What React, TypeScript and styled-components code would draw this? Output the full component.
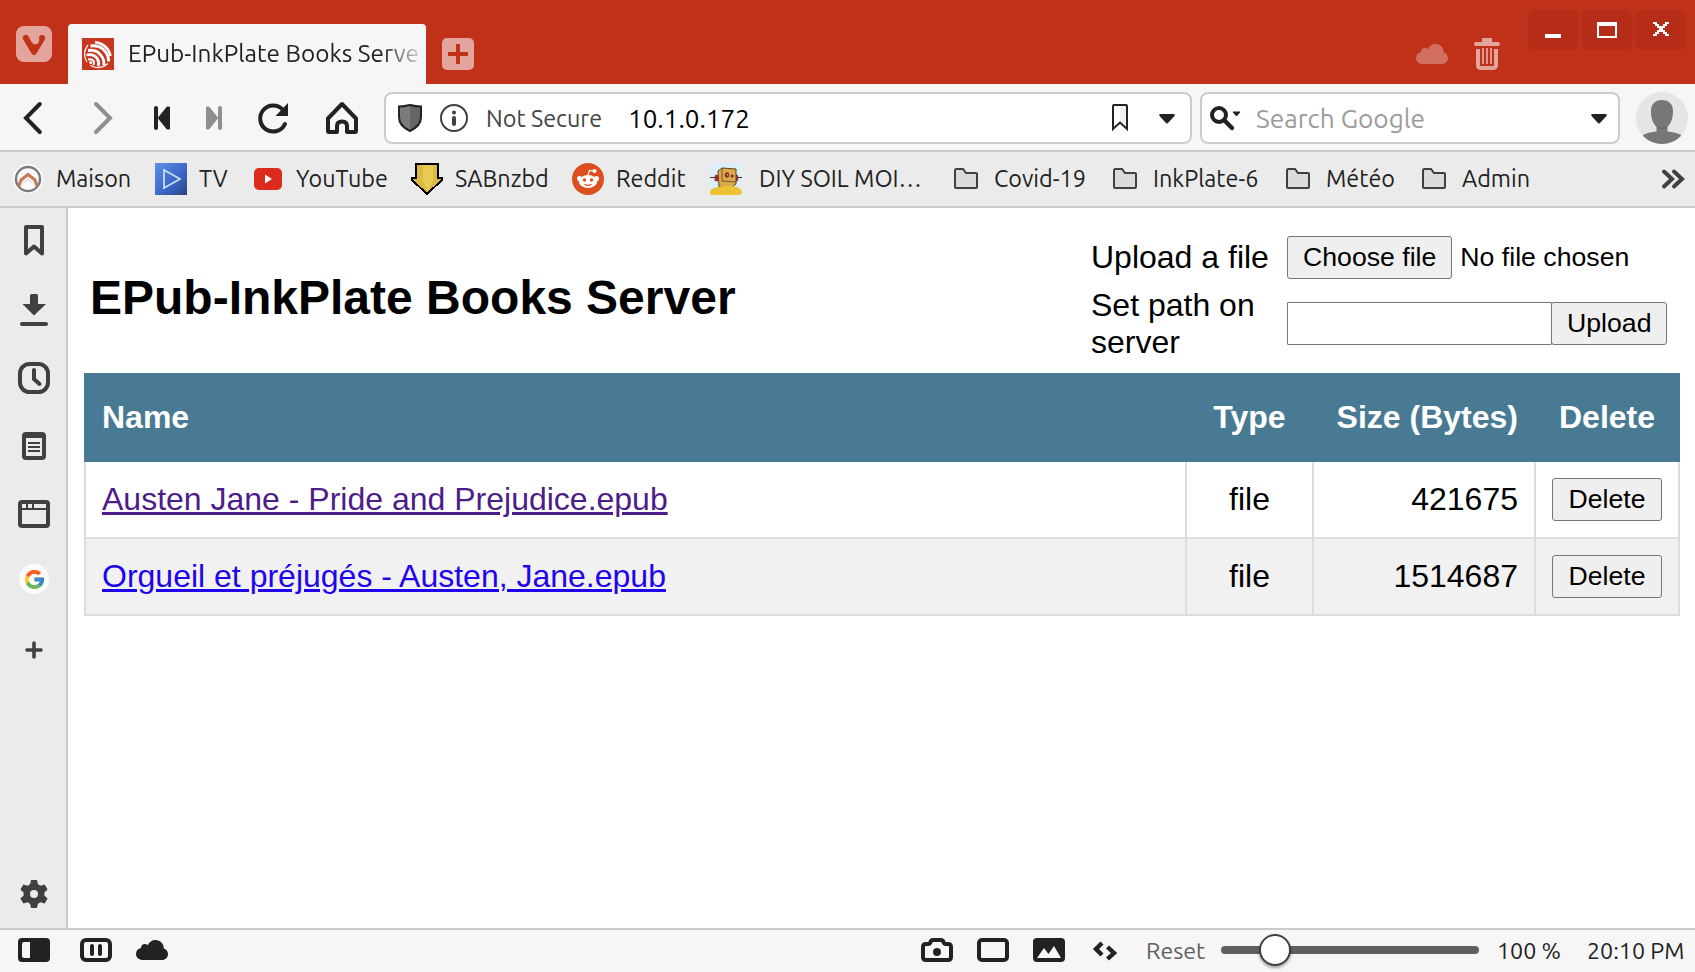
import React from "react";
import styled, { createGlobalStyle } from "styled-components";
import { FcGoogle } from "react-icons/fc";

const INK = "#222";
const SIDE_INK = "#404040";
const RED = "#c0311a";
const PALE = "#e2a49b";

const GlobalStyle = createGlobalStyle`
  * { box-sizing: border-box; }
  html, body { margin: 0; padding: 0; background: #fff; }
  svg { display: block; flex: none; }
`;

const Window = styled.div`
  width: 1695px;
  height: 972px;
  display: flex;
  flex-direction: column;
  overflow: hidden;
  background: #fff;
  font: 23.4px "Ubuntu", "Noto Sans", sans-serif;
  color: ${INK};
  white-space: nowrap;
`;

/* Title bar */
const TitleBar = styled.header`
  height: 84px;
  flex: none;
  display: flex;
  align-items: flex-start;
  background: ${RED};
`;
const MenuButton = styled.div`
  width: 36px;
  height: 36px;
  margin: 26px 16px 0;
  border-radius: 8px;
  background: ${PALE};
`;
const Tab = styled.div`
  width: 358px;
  height: 60px;
  margin-top: 24px;
  padding: 0 8px 0 14px;
  display: flex;
  align-items: center;
  gap: 14px;
  border-radius: 4px 4px 0 0;
  background: #f6f6f6;
`;
const TabTitle = styled.span`
  flex: 1;
  overflow: hidden;
  padding-bottom: 2px;
  font-size: 24.3px;
  mask-image: linear-gradient(to right, #000 calc(100% - 36px), rgba(0, 0, 0, 0.2) 100%);
`;
const NewTab = styled.div`
  width: 32px;
  height: 32px;
  margin: 38px auto 0 16px;
  border-radius: 5px;
  background: ${PALE};
`;
const TrayIcons = styled.div`
  display: flex;
  align-items: center;
  gap: 26px;
  margin: 38px 28px 0 0;
`;
const WindowButtons = styled.div`
  display: flex;
  gap: 4px;
  margin: 10px 9px 0 0;
`;
const WindowButton = styled.div`
  width: 50px;
  height: 40px;
  border-radius: 7px;
  background: #b52d19;
`;

/* Address bar */
const Toolbar = styled.div`
  height: 68px;
  flex: none;
  display: flex;
  align-items: center;
  padding-top: 2px;
  border-bottom: 2px solid #cbcbcb;
  background: #f6f6f6;
`;
const Field = styled.div<{ $width: number; $end: number }>`
  width: ${(p) => p.$width}px;
  height: 52px;
  display: flex;
  align-items: center;
  margin-left: 8px;
  padding-right: ${(p) => p.$end}px;
  border: 2px solid #cccccc;
  border-radius: 8px;
  background: #fff;
`;
const Security = styled.span`
  width: 142px;
  margin-left: 16px;
  color: #444;
`;
const Address = styled.span`
  flex: 1;
  font-size: 26px;
  color: #000;
`;
const Placeholder = styled.span`
  flex: 1;
  margin-left: 14px;
  font-size: 26.2px;
  color: #9b9b9b;
`;
const SavePage = styled.div`
  margin-right: 14px;
`;
const Avatar = styled.div`
  width: 52px;
  height: 52px;
  margin-left: 16px;
  border-radius: 50%;
  overflow: hidden;
  background: #e5e5e5;
`;

/* Bookmarks */
const BookmarkBar = styled.nav`
  height: 56px;
  flex: none;
  display: flex;
  align-items: center;
  padding: 0 8px 0 12px;
  border-bottom: 2px solid #cbcbcb;
  background: #ebebeb;
`;
const Bookmark = styled.div<{ $width: number; $gap?: number }>`
  width: ${(p) => p.$width}px;
  flex: none;
  display: flex;
  align-items: center;
  gap: ${(p) => p.$gap ?? 12}px;
`;
const BookmarkName = styled.span`
  padding-bottom: 2px;
`;
const More = styled.div`
  margin-left: auto;
`;

/* Body */
const Body = styled.div`
  flex: 1;
  display: flex;
  min-height: 0;
`;
const SidePanel = styled.aside`
  width: 68px;
  flex: none;
  display: flex;
  flex-direction: column;
  border-right: 2px solid #cbcbcb;
  background: #ebebeb;

  & > :last-child { margin-top: auto; }
`;
const PanelSlot = styled.div`
  width: 66px;
  height: 68px;
  flex: none;
`;
const GoogleBadge = styled.div`
  width: 30px;
  height: 30px;
  margin: 16px 19px;
  display: flex;
  align-items: center;
  justify-content: center;
  border-radius: 50%;
  background: #fdfdfd;

  & > svg { opacity: 0.85; }
`;

/* Web page */
const Page = styled.main`
  flex: 1;
  padding: 28px 15px 0 16px;
  font: 32px/37px "Liberation Sans", Arial, sans-serif;
  color: #000;
  white-space: normal;
`;
const PageHead = styled.div`
  height: 125px;
  margin-bottom: 12px;
  padding-left: 6px;
  display: grid;
  grid-template-columns: 1fr 589px;
  align-items: center;
`;
const Heading = styled.h1`
  margin: 0;
  padding-bottom: 2px;
  font-size: 48px;
  line-height: 55px;
`;
const Form = styled.div`
  display: grid;
  grid-template-columns: 180px 1fr;
  column-gap: 16px;
  row-gap: 8px;
  align-items: center;
`;
const Controls = styled.div`
  display: flex;
  align-items: center;
  font-size: 26.667px;

  &:last-child { padding-bottom: 1px; }
`;
const Button = styled.button`
  height: 43px;
  padding: 0 15px 1px;
  border: 1px solid #767676;
  border-radius: 3px;
  background: #efefef;
  font: 26.667px "Liberation Sans", Arial, sans-serif;
  color: #000;
`;
const PathInput = styled.input`
  width: 265px;
  height: 43px;
  margin-right: -1px;
  border: 1px solid #767676;
  border-radius: 1px;
  background: #fff;
`;
const FileName = styled.span`
  margin-left: 8px;
`;
const Table = styled.table`
  width: 1596px;
  table-layout: fixed;
  border-collapse: separate;
  border-spacing: 0;
`;
const HeadCell = styled.th<{ $align?: string; $width: number }>`
  width: ${(p) => p.$width}px;
  height: 89px;
  padding: 0 16px;
  border-right: 2px solid #487b93;
  background: #487b93;
  color: #fff;
  text-align: ${(p) => p.$align ?? "center"};
  white-space: nowrap;

  &:first-child { padding-left: 18px; }
  &:last-child { padding: 0; }
`;
const Row = styled.tr<{ $shaded?: boolean }>`
  background: ${(p) => (p.$shaded ? "#f1f1f1" : "#fff")};
`;
const Cell = styled.td<{ $align?: string }>`
  height: 77px;
  padding: 0 16px;
  border: solid #ddd;
  border-width: 0 2px 2px 0;
  text-align: ${(p) => p.$align ?? "center"};

  &:first-child { border-left-width: 2px; }
  & > button { display: block; width: 110px; }
`;
const BookLink = styled.a<{ $visited?: boolean }>`
  color: ${(p) => (p.$visited ? "#4c1c88" : "#1f05ee")};
  text-decoration: underline;
  text-decoration-thickness: 3px;
`;

/* Status bar */
const StatusBar = styled.footer`
  height: 44px;
  flex: none;
  display: flex;
  align-items: center;
  padding: 0 10px 2px 18px;
  border-top: 2px solid #cbcbcb;
  background: #f6f6f6;
  font-size: 23.2px;
`;
const StatusGroup = styled.div<{ $gap: number }>`
  display: flex;
  align-items: center;
  gap: ${(p) => p.$gap}px;
`;
const CloudSlot = styled.div`
  margin: 0 auto 0 24px;
`;
const Reset = styled.span`
  width: 59px;
  margin-left: 25px;
  color: #606060;
`;
const Track = styled.div`
  width: 258px;
  height: 8px;
  margin: 0 18px 0 16px;
  display: flex;
  align-items: center;
  padding-left: 38px;
  border-radius: 4px;
  background: #606060;
`;
const Knob = styled.div`
  width: 32px;
  height: 32px;
  border: 2px solid #404040;
  border-radius: 50%;
  background: #fff;
  box-shadow: 0 2px 3px rgba(0, 0, 0, 0.35);
`;
const Percent = styled.span`
  width: 90px;
`;
const Clock = styled.span`
  width: 98px;
`;

const CLOUD =
  "M7 20C3 20 0 17.500 0 14C0 10.800 2 8.500 5 8C5 5 7.500 3.500 10 4.200L12 5C13 2 16 0 19.500 0C24 0 27.800 3.500 27.800 8.500C30.300 9.300 32 11.500 32 14C32 17.500 29.500 20 26 20Z";

const Cloud = ({ color }: { color: string }) => (
  <svg width="32" height="20" viewBox="0 0 32 20"><path d={CLOUD} fill={color} /></svg>
);

const Folder = () => (
  <svg width="32" height="32" viewBox="0 0 32 32">
    <path d="M5 7.500Q5 6 6 6H13L16 10H26Q27 10 27 11V24Q27 25 26 25H6Q5 25 5 24Z" fill="#dadada" stroke={SIDE_INK} strokeWidth="2" />
  </svg>
);

const MaisonIcon = () => (
  <svg width="32" height="32" viewBox="0 0 32 32" fill="none">
    <circle cx="16" cy="16" r="15" fill="#fafafa" />
    <circle cx="16" cy="16" r="12" stroke="#7b7b7b" strokeWidth="2.400" />
    <path d="M7 23L9 17L16 11.500L23 17L25 23" stroke="#c77a55" strokeWidth="3" />
    <path d="M11 20L16 16.500L21 20" stroke="#e8dcd6" strokeWidth="1.500" />
  </svg>
);

const TvIcon = () => (
  <svg width="32" height="32" viewBox="0 0 32 32">
    <defs>
      <linearGradient id="tv" x1="0" y1="0" x2="1" y2="1">
        <stop offset="0" stopColor="#5d90e8" />
        <stop offset="0.600" stopColor="#3a63c4" />
        <stop offset="1" stopColor="#2b477e" />
      </linearGradient>
    </defs>
    <rect width="32" height="32" fill="url(#tv)" />
    <path d="M9 7V25L25 16Z" fill="none" stroke="#c9dcf8" strokeWidth="1.800" />
  </svg>
);

const YouTubeIcon = () => (
  <svg width="32" height="32" viewBox="0 0 32 32">
    <rect x="2" y="5" width="28" height="22" rx="5" fill="#dc2a1c" />
    <path d="M13 11.500V20.500L20 16Z" fill="#fff" />
  </svg>
);

const SabIcon = () => (
  <svg width="32" height="32" viewBox="0 0 32 32" shapeRendering="crispEdges">
    <path d="M5 1H27V15H31V17L16 31L1 17V15H5Z" fill="#dcb844" stroke="#000" strokeWidth="2" />
    <path d="M12 2H22V18L17 28L12 18Z" fill="#e6cb55" />
  </svg>
);

const RedditIcon = () => (
  <svg width="32" height="32" viewBox="0 0 32 32">
    <circle cx="16" cy="16" r="16" fill="#dd4e1f" />
    <path d="M16 12L17.500 7.500L22 8" fill="none" stroke="#fff" strokeWidth="1.200" />
    <circle cx="22.500" cy="8" r="2" fill="#fff" />
    <circle cx="7.500" cy="15.500" r="2.500" fill="#fff" />
    <circle cx="24.500" cy="15.500" r="2.500" fill="#fff" />
    <ellipse cx="16" cy="18.500" rx="9.200" ry="6.500" fill="#fff" />
    <circle cx="12.500" cy="17" r="1.700" fill="#dd4e1f" />
    <circle cx="19.500" cy="17" r="1.700" fill="#dd4e1f" />
    <path d="M12.500 21.300Q16 23.500 19.500 21.300" fill="none" stroke="#dd4e1f" strokeWidth="1.100" />
  </svg>
);

const RobotIcon = () => (
  <svg width="32" height="32" viewBox="0 0 32 32">
    <rect width="32" height="32" rx="4" fill="#dbeefa" />
    <path d="M0 14.500H6M26 14.500H32" stroke="#34333a" strokeWidth="1.200" />
    <ellipse cx="6.500" cy="15" rx="2" ry="3.500" fill="#a8292c" />
    <ellipse cx="26.500" cy="15" rx="1.800" ry="3.500" fill="#a8292c" />
    <path d="M8 8L12 5L26 6V21L22 24H9Z" fill="#dda84c" stroke="#5e4522" strokeWidth="1" />
    <path d="M12 5V18L26 19" fill="none" stroke="#5e4522" strokeWidth="0.800" />
    <ellipse cx="17" cy="12" rx="2.200" ry="2.800" fill="#8c2d27" />
    <circle cx="17.500" cy="12" r="0.800" fill="#eeb08c" />
    <circle cx="22" cy="13" r="1.500" fill="#6b3a28" />
    <path d="M0 31V28Q2 24.500 9 24L13 23H22Q32 24 32 30Q31 32 28 32H2Q0 32 0 31Z" fill="#edc233" />
  </svg>
);

const FaviconIcon = () => (
  <svg width="32" height="32" viewBox="0 0 32 32" fill="none">
    <rect width="32" height="32" fill="#c8361f" />
    <path d="M6 7A14 14 0 0 0 5 24M8.500 27.500A14.500 14.500 0 0 0 26 25.500" stroke="#fff" strokeWidth="1.200" />
    <path d="M13 4.200A17 17 0 0 1 28.500 18" stroke="#fff" strokeWidth="2.600" />
    <path d="M8.500 8Q19 6.500 24 14.500Q27 19 26.500 23.500" stroke="#fff" strokeWidth="2.800" />
    <path d="M6 12.500Q15 11 19.500 18Q23 23 21.500 27.500" stroke="#fff" strokeWidth="2.800" />
    <path d="M4.500 17Q12 15.500 15.500 21Q17.500 25 16 28" stroke="#fff" strokeWidth="2.800" />
    <path d="M6 21.500Q10.500 20.500 12 23.500Q12.500 25.500 11 27" stroke="#fff" strokeWidth="1.800" />
    <circle cx="8.800" cy="24.500" r="1.500" fill="#fff" />
  </svg>
);

const DropArrow = () => (
  <svg width="32" height="48" viewBox="0 0 32 48">
    <path d="M9 20H23Q24.500 20.500 23.500 22L17 29Q16 30 15 29L8.500 22Q7.500 20.500 9 20Z" fill={INK} />
  </svg>
);

const navIcons = [
  { width: 68, draw: <path d="M39.800 20L26 34L39.800 48" stroke={INK} strokeWidth="4" strokeLinecap="round" /> },
  { width: 68, draw: <path d="M28 20L42 34L28 48" stroke="#8f8f8f" strokeWidth="4" strokeLinecap="round" /> },
  { width: 52, draw: <><path d="M20 24V44" stroke={INK} strokeWidth="4" strokeLinecap="round" /><path d="M33 23.500V44.500L31.500 44.500L23 34L31.500 23.500Z" fill={INK} stroke={INK} strokeWidth="2" strokeLinejoin="round" /></> },
  { width: 52, draw: <><path d="M32 24V44" stroke="#8f8f8f" strokeWidth="4" strokeLinecap="round" /><path d="M19 23.500V44.500L20.500 44.500L29 34L20.500 23.500Z" fill="#8f8f8f" stroke="#8f8f8f" strokeWidth="2" strokeLinejoin="round" /></> },
  { width: 68, draw: <><path d="M43 26A13 13 0 1 0 45 40" stroke={INK} strokeWidth="4" strokeLinecap="round" /><path d="M48 19V32H35.500Z" fill={INK} /></> },
  { width: 68, draw: <path d="M20 34.500L34 20L48 34.500V47Q48 48 47 48H39V42Q39 37.500 34 37.500Q29 37.500 29 42V48H21Q20 48 20 47Z" stroke={INK} strokeWidth="4" strokeLinejoin="round" /> },
];

const bookmarks = [
  { name: "Maison", width: 143, icon: <MaisonIcon /> },
  { name: "TV", width: 97, icon: <TvIcon /> },
  { name: "YouTube", width: 159, icon: <YouTubeIcon /> },
  { name: "SABnzbd", width: 161, icon: <SabIcon /> },
  { name: "Reddit", width: 138, icon: <RedditIcon /> },
  { name: "DIY SOIL MOI…", width: 240, gap: 17, icon: <RobotIcon /> },
  { name: "Covid-19", width: 159, icon: <Folder /> },
  { name: "InkPlate-6", width: 173, icon: <Folder /> },
  { name: "Météo", width: 136, icon: <Folder /> },
  { name: "Admin", width: 130, icon: <Folder /> },
];

const panelIcons = [
  <path d="M26 19H42V45.500L34 38.500L26 45.500Z" fill="none" stroke={SIDE_INK} strokeWidth="4" strokeLinejoin="round" />,
  <><path d="M30 19.500Q30 18 31.500 18H36.500Q38 18 38 19.500V28H46L34 39.500L22.500 28H30Z" fill={SIDE_INK} /><path d="M22 48H46" stroke={SIDE_INK} strokeWidth="4" strokeLinecap="round" /></>,
  <><rect x="20" y="20" width="28" height="28" rx="9.500" fill="none" stroke={SIDE_INK} strokeWidth="4" /><path d="M34 26V35L39.500 40" fill="none" stroke={SIDE_INK} strokeWidth="4" strokeLinecap="round" /></>,
  <><rect x="22" y="20" width="24" height="28" rx="4" fill={SIDE_INK} /><path d="M26 26H42V44H26Z" fill="#ebebeb" /><path d="M28 31H40M28 35H40M28 39H40" stroke={SIDE_INK} strokeWidth="2" /></>,
  <><rect x="18" y="20" width="32" height="28" rx="4" fill={SIDE_INK} /><path d="M22 24H26V28H22ZM28 24H32V28H28ZM34 24H46V28H34ZM22 30H46V44H22Z" fill="#ebebeb" /></>,
];

const books = [
  { name: "Austen Jane - Pride and Prejudice.epub", size: "421675", visited: true },
  { name: "Orgueil et préjugés - Austen, Jane.epub", size: "1514687", visited: false },
];

export default function App() {
  return (
    <Window>
      <GlobalStyle />
      <TitleBar>
        <MenuButton>
          <svg width="36" height="36" viewBox="0 0 36 36">
            <path d="M7.200 13.500A3 3 0 0 1 12.500 10.500L15.500 16Q17 18.800 20 18.300Q23.300 17.500 23.300 13.500A3.100 3.100 0 1 1 28.800 13.500L20.500 27.500Q18 30.500 15.500 27.500Z" fill={RED} />
          </svg>
        </MenuButton>
        <Tab>
          <FaviconIcon />
          <TabTitle>EPub-InkPlate Books Serve</TabTitle>
        </Tab>
        <NewTab>
          <svg width="32" height="32" viewBox="0 0 32 32"><path d="M6 16H26M16 6V26" stroke={RED} strokeWidth="4" /></svg>
        </NewTab>
        <TrayIcons>
          <Cloud color="#d16f60" />
          <svg width="26" height="32" viewBox="0 0 26 32">
            <path d="M8 4V1Q8 0 9 0H17Q18 0 18 1V4H24Q26 4 26 6Q26 8 24 8H2Q0 8 0 6Q0 4 2 4Z" fill={PALE} />
            <path d="M4 11V27Q4 30 7 30H19Q22 30 22 27V11" fill="none" stroke={PALE} strokeWidth="4" />
            <path d="M9 10V26M13 10V26M17 10V26" stroke={PALE} strokeWidth="1.800" />
          </svg>
        </TrayIcons>
        <WindowButtons>
          <WindowButton><svg width="50" height="40"><rect x="17" y="24" width="16" height="4" fill="#fff" /></svg></WindowButton>
          <WindowButton><svg width="50" height="40"><path fillRule="evenodd" d="M15 12H35V28H15ZM17 16H33V26H17Z" fill="#fff" /></svg></WindowButton>
          <WindowButton>
            <svg width="50" height="40" shapeRendering="crispEdges">
              <path d="M17 12H21V14H23V16H27V14H29V12H33V14H31V16H29V18H27V20H29V22H31V24H33V26H29V24H27V22H23V24H21V26H17V24H19V22H21V20H23V18H21V16H19V14H17Z" fill="#fff" />
            </svg>
          </WindowButton>
        </WindowButtons>
      </TitleBar>

      <Toolbar>
        {navIcons.map((n, i) => (
          <svg key={i} width={n.width} height="68" viewBox={`0 0 ${n.width} 68`} fill="none">{n.draw}</svg>
        ))}
        <Field $width={808} $end={7}>
          <svg width="84" height="48" viewBox="0 0 84 48">
            <path d="M24 10Q18 13 13 13V23Q13 32 24 37.500Z" fill="#7b7b7b" />
            <path d="M24 10Q30 13 35 13V23Q35 32 24 37.500Z" fill="#666" />
            <path d="M24 11Q18 12.500 13 12.500V23Q13 32 24 37Q35 32 35 23V12.500Q30 12.500 24 11Z" fill="none" stroke={INK} strokeWidth="2" />
            <circle cx="68" cy="24" r="13" fill="none" stroke={SIDE_INK} strokeWidth="2" />
            <circle cx="68" cy="18.500" r="2" fill={SIDE_INK} />
            <path d="M68 24V30" stroke={SIDE_INK} strokeWidth="4" strokeLinecap="round" />
          </svg>
          <Security>Not Secure</Security>
          <Address>10.1.0.172</Address>
          <SavePage>
            <svg width="36" height="48" viewBox="0 0 36 48">
              <path d="M19 12H27V34L19 28Z" fill="#efefef" />
              <path d="M12 35V12Q12 11 13 11H25Q26 11 26 12V35L19 28.500Z" fill="none" stroke={INK} strokeWidth="2" />
            </svg>
          </SavePage>
          <DropArrow />
        </Field>
        <Field $width={420} $end={3}>
          <svg width="40" height="48" viewBox="0 0 40 48">
            <circle cx="17" cy="21" r="7" fill="none" stroke={INK} strokeWidth="4" />
            <path d="M22 26L30 34" stroke={INK} strokeWidth="4.500" strokeLinecap="round" />
            <path d="M31 18H38L34.500 22Z" fill={INK} stroke={INK} strokeWidth="1" strokeLinejoin="round" />
          </svg>
          <Placeholder>Search Google</Placeholder>
          <DropArrow />
        </Field>
        <Avatar>
          <svg width="52" height="52" viewBox="0 0 52 52">
            <path d="M26 8C33 8 37 12 37 19C37 27 35 31 31.500 35V39.500Q40 40 45 43V52H7V43Q12 40 20.500 39.500V35C17 31 15 27 15 19C15 12 19 8 26 8Z" fill="#777" />
            <path d="M22 35Q26 38 30 35" fill="none" stroke="#666" strokeWidth="1.500" />
          </svg>
        </Avatar>
      </Toolbar>

      <BookmarkBar>
        {bookmarks.map((b) => (
          <Bookmark key={b.name} $width={b.width} $gap={b.gap}>
            {b.icon}
            <BookmarkName>{b.name}</BookmarkName>
          </Bookmark>
        ))}
        <More>
          <svg width="26" height="24" viewBox="0 0 26 24">
            <path d="M3 4.500L11 12L3 19.500M13 4.500L21 12L13 19.500" fill="none" stroke={SIDE_INK} strokeWidth="4" strokeLinecap="round" />
          </svg>
        </More>
      </BookmarkBar>

      <Body>
        <SidePanel>
          {panelIcons.map((icon, i) => (
            <PanelSlot key={i}><svg width="66" height="68" viewBox="0 0 66 68">{icon}</svg></PanelSlot>
          ))}
          <PanelSlot><GoogleBadge><FcGoogle size={23} /></GoogleBadge></PanelSlot>
          <PanelSlot>
            <svg width="66" height="68" viewBox="0 0 66 68"><path d="M27 34H41M34 27V41" stroke={SIDE_INK} strokeWidth="3.600" strokeLinecap="round" /></svg>
          </PanelSlot>
          <PanelSlot>
            <svg width="66" height="68" viewBox="0 0 66 68">
              <circle cx="34" cy="34" r="10.500" fill={SIDE_INK} />
              {[0, 60, 120].map((a) => (
                <path key={a} d="M31 20H37L38.500 27V41L37 48H31L29.500 41V27Z" fill={SIDE_INK} transform={`rotate(${a} 34 34)`} />
              ))}
              <circle cx="34" cy="34" r="4" fill="#ebebeb" />
            </svg>
          </PanelSlot>
        </SidePanel>

        <Page>
          <PageHead>
            <Heading>EPub-InkPlate Books Server</Heading>
            <Form>
              <span>Upload a file</span>
              <Controls><Button>Choose file</Button><FileName>No file chosen</FileName></Controls>
              <span>Set path on server</span>
              <Controls><PathInput /><Button>Upload</Button></Controls>
            </Form>
          </PageHead>
          <Table>
            <thead>
              <tr>
                <HeadCell $width={1103} $align="left">Name</HeadCell>
                <HeadCell $width={127}>Type</HeadCell>
                <HeadCell $width={222} $align="right">Size (Bytes)</HeadCell>
                <HeadCell $width={144}>Delete</HeadCell>
              </tr>
            </thead>
            <tbody>
              {books.map((b, i) => (
                <Row key={b.name} $shaded={i % 2 === 1}>
                  <Cell $align="left"><BookLink href="#" $visited={b.visited}>{b.name}</BookLink></Cell>
                  <Cell>file</Cell>
                  <Cell $align="right">{b.size}</Cell>
                  <Cell><Button>Delete</Button></Cell>
                </Row>
              ))}
            </tbody>
          </Table>
        </Page>
      </Body>

      <StatusBar>
        <StatusGroup $gap={30}>
          <svg width="32" height="24" viewBox="0 0 32 24"><rect width="32" height="24" rx="4" fill={INK} /><path d="M12 4V20H6Q4 20 4 18V6Q4 4 6 4Z" fill="#f6f6f6" /></svg>
          <svg width="32" height="24" viewBox="0 0 32 24"><rect x="2" y="2" width="28" height="20" rx="4" fill="none" stroke={INK} strokeWidth="4" /><path d="M12 8V16M20 8V16" stroke={INK} strokeWidth="4" strokeLinecap="round" /></svg>
        </StatusGroup>
        <CloudSlot><Cloud color={INK} /></CloudSlot>
        <StatusGroup $gap={24}>
          <svg width="32" height="24" viewBox="0 0 32 24"><path d="M2 9Q2 6 5 6H7Q9 6 9.500 4Q10 2 12 2H20Q22 2 22.500 4Q23 6 25 6H27Q30 6 30 9V19Q30 22 27 22H5Q2 22 2 19Z" fill="none" stroke={INK} strokeWidth="4" /><circle cx="16" cy="14" r="4" fill={INK} /></svg>
          <svg width="32" height="24" viewBox="0 0 32 24"><rect x="2" y="2" width="28" height="20" rx="3" fill="none" stroke={INK} strokeWidth="4" /></svg>
          <svg width="32" height="24" viewBox="0 0 32 24"><rect width="32" height="24" rx="4" fill={INK} /><path d="M4 20L11 10L15.500 16L21 8L28 20Z" fill="#f6f6f6" /></svg>
          <svg width="32" height="24" viewBox="0 0 32 24"><path d="M13 5L7 11L13 17M18.500 9L25 15L18.500 21" fill="none" stroke={INK} strokeWidth="4.400" /></svg>
        </StatusGroup>
        <Reset>Reset</Reset>
        <Track><Knob /></Track>
        <Percent>100 %</Percent>
        <Clock>20:10 PM</Clock>
      </StatusBar>
    </Window>
  );
}
